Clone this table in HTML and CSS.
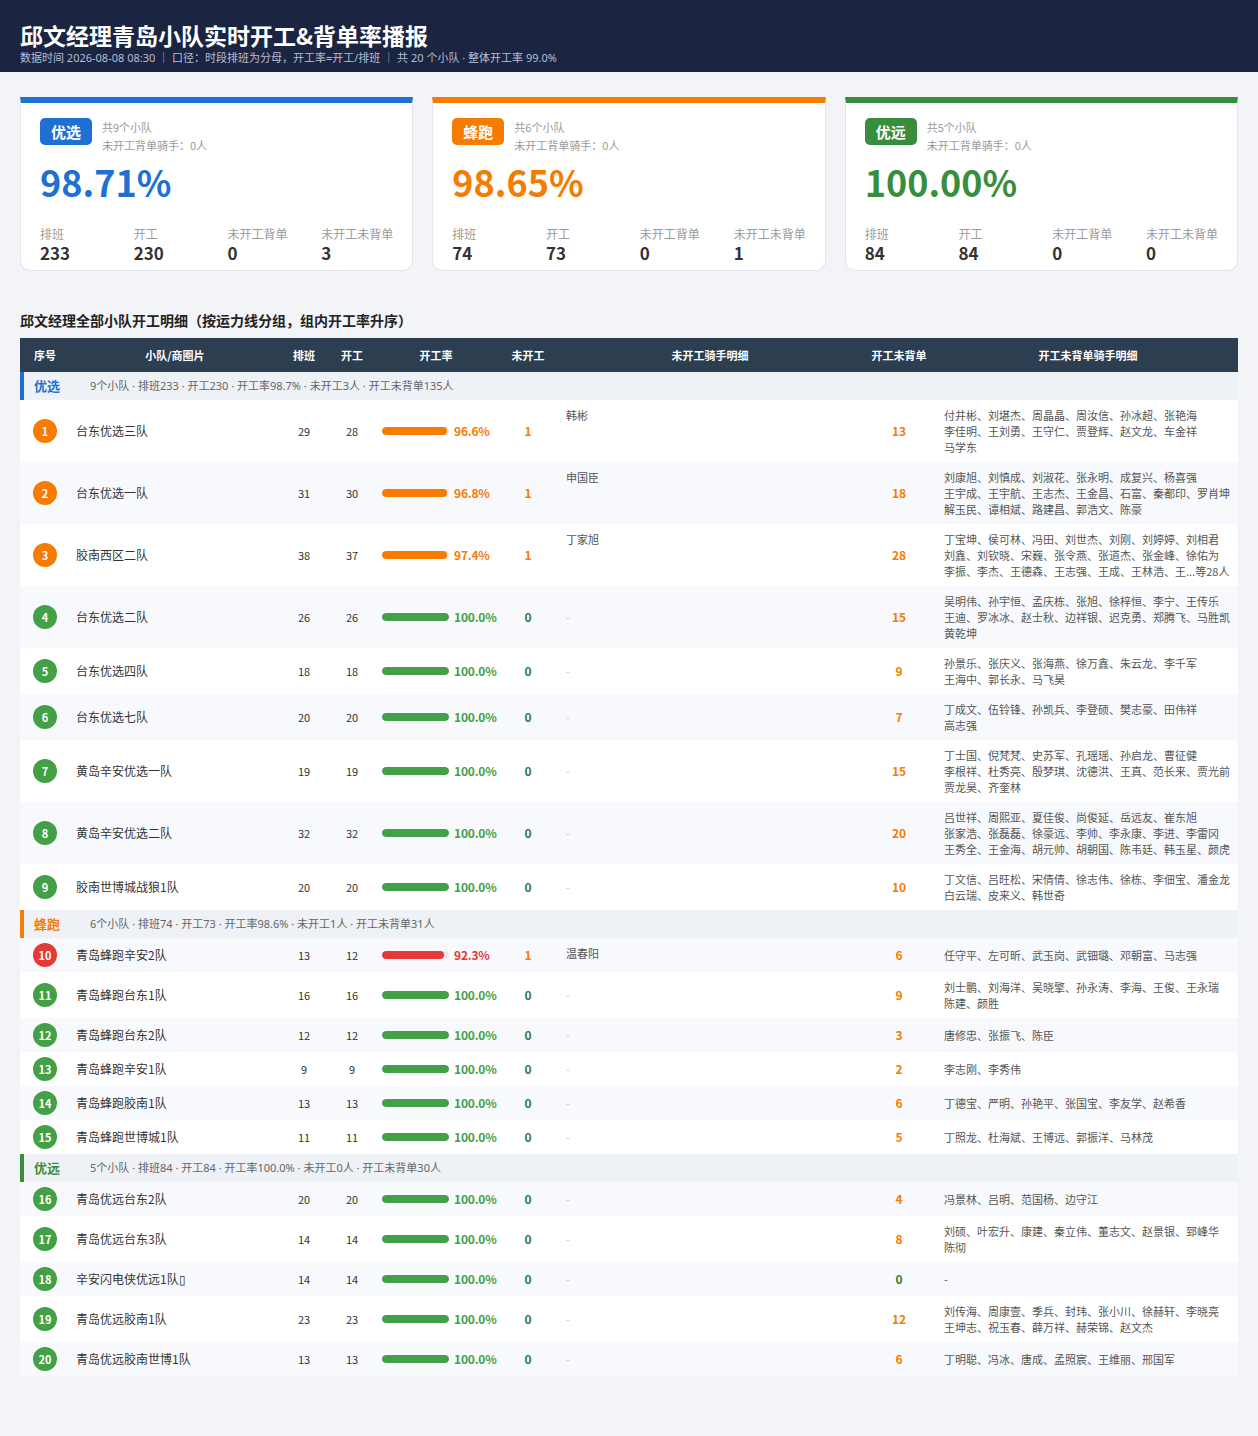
FILE: index.html
```html
<!DOCTYPE html>
<html lang="zh-CN">
<head>
<meta charset="utf-8">
<title>邱文经理青岛小队实时开工&amp;背单率播报</title>
<link rel="stylesheet" href="styles.css">
</head>
<body>
<header class="top">
  <h1>邱文经理青岛小队实时开工&amp;背单率播报</h1>
  <div class="sub">数据时间 2026-08-08 08:30 ｜ 口径：时段排班为分母，开工率=开工/排班 ｜ 共 20 个小队 · 整体开工率 99.0%</div>
</header>
<main class="main">
  <section class="cards">
    <div class="card c-blue">
      <div class="head"><span class="tag">优选</span><div class="meta">共9个小队<br>未开工背单骑手：0人</div></div>
      <div class="pct">98.71%</div>
      <div class="stats">
        <div><div class="l">排班</div><div class="v">233</div></div>
        <div><div class="l">开工</div><div class="v">230</div></div>
        <div><div class="l">未开工背单</div><div class="v">0</div></div>
        <div><div class="l">未开工未背单</div><div class="v">3</div></div>
      </div>
    </div>
    <div class="card c-orange">
      <div class="head"><span class="tag">蜂跑</span><div class="meta">共6个小队<br>未开工背单骑手：0人</div></div>
      <div class="pct">98.65%</div>
      <div class="stats">
        <div><div class="l">排班</div><div class="v">74</div></div>
        <div><div class="l">开工</div><div class="v">73</div></div>
        <div><div class="l">未开工背单</div><div class="v">0</div></div>
        <div><div class="l">未开工未背单</div><div class="v">1</div></div>
      </div>
    </div>
    <div class="card c-green">
      <div class="head"><span class="tag">优远</span><div class="meta">共5个小队<br>未开工背单骑手：0人</div></div>
      <div class="pct">100.00%</div>
      <div class="stats">
        <div><div class="l">排班</div><div class="v">84</div></div>
        <div><div class="l">开工</div><div class="v">84</div></div>
        <div><div class="l">未开工背单</div><div class="v">0</div></div>
        <div><div class="l">未开工未背单</div><div class="v">0</div></div>
      </div>
    </div>
  </section>

  <h2 class="sec-title">邱文经理全部小队开工明细（按运力线分组，组内开工率升序）</h2>

  <table class="tbl">
    <colgroup>
      <col class="w-rk"><col class="w-team"><col class="w-num"><col class="w-num"><col class="w-rate"><col class="w-miss"><col class="w-who"><col class="w-bk"><col class="w-names">
    </colgroup>
    <thead>
      <tr><th>序号</th><th>小队/商圈片</th><th>排班</th><th>开工</th><th>开工率</th><th>未开工</th><th>未开工骑手明细</th><th>开工未背单</th><th>开工未背单骑手明细</th></tr>
    </thead>
    <tbody>
      <tr class="grp g-blue"><td colspan="9"><div class="grp-in"><span class="gl">优选</span><span class="gs">9个小队 · 排班233 · 开工230 · 开工率98.7% · 未开工3人 · 开工未背单135人</span></div></td></tr>

      <tr><td><span class="rk o">1</span></td><td class="team">台东优选三队</td><td class="num">29</td><td class="num">28</td><td><div class="rate"><span class="bar"><span class="fill o" style="width:96.6%"></span></span><span class="rt o">96.6%</span></div></td><td class="miss o">1</td><td class="who">韩彬</td><td class="bk">13</td><td class="names">付井彬、刘堪杰、周晶晶、周汝信、孙冰超、张艳海<br>李佳明、王刘勇、王守仁、贾登辉、赵文龙、车金祥<br>马学东</td></tr>

      <tr class="alt"><td><span class="rk o">2</span></td><td class="team">台东优选一队</td><td class="num">31</td><td class="num">30</td><td><div class="rate"><span class="bar"><span class="fill o" style="width:96.8%"></span></span><span class="rt o">96.8%</span></div></td><td class="miss o">1</td><td class="who">申国臣</td><td class="bk">18</td><td class="names">刘康旭、刘慎成、刘淑花、张永明、成复兴、杨喜强<br>王宇成、王宇航、王志杰、王金昌、石富、秦都印、罗肖坤<br>解玉民、谭相斌、路建昌、郭浩文、陈豪</td></tr>

      <tr><td><span class="rk o">3</span></td><td class="team">胶南西区二队</td><td class="num">38</td><td class="num">37</td><td><div class="rate"><span class="bar"><span class="fill o" style="width:97.4%"></span></span><span class="rt o">97.4%</span></div></td><td class="miss o">1</td><td class="who">丁家旭</td><td class="bk">28</td><td class="names">丁宝坤、侯可林、冯田、刘世杰、刘刚、刘婷婷、刘相君<br>刘鑫、刘钦晓、宋巍、张令燕、张道杰、张金峰、徐佑为<br>李振、李杰、王德森、王志强、王成、王林浩、王...等28人</td></tr>

      <tr class="alt"><td><span class="rk g">4</span></td><td class="team">台东优选二队</td><td class="num">26</td><td class="num">26</td><td><div class="rate"><span class="bar"><span class="fill g" style="width:100%"></span></span><span class="rt g">100.0%</span></div></td><td class="miss g">0</td><td class="dash">-</td><td class="bk">15</td><td class="names">吴明伟、孙宇恒、孟庆栋、张旭、徐梓恒、李宁、王传乐<br>王迪、罗冰冰、赵士秋、边祥银、迟克勇、郑腾飞、马胜凯<br>黄乾坤</td></tr>

      <tr><td><span class="rk g">5</span></td><td class="team">台东优选四队</td><td class="num">18</td><td class="num">18</td><td><div class="rate"><span class="bar"><span class="fill g" style="width:100%"></span></span><span class="rt g">100.0%</span></div></td><td class="miss g">0</td><td class="dash">-</td><td class="bk">9</td><td class="names">孙景乐、张庆义、张海燕、徐万鑫、朱云龙、李千军<br>王海中、郭长永、马飞昊</td></tr>

      <tr class="alt"><td><span class="rk g">6</span></td><td class="team">台东优选七队</td><td class="num">20</td><td class="num">20</td><td><div class="rate"><span class="bar"><span class="fill g" style="width:100%"></span></span><span class="rt g">100.0%</span></div></td><td class="miss g">0</td><td class="dash">-</td><td class="bk">7</td><td class="names">丁成文、伍铃锋、孙凯兵、李登硕、樊志豪、田伟祥<br>高志强</td></tr>

      <tr><td><span class="rk g">7</span></td><td class="team">黄岛辛安优选一队</td><td class="num">19</td><td class="num">19</td><td><div class="rate"><span class="bar"><span class="fill g" style="width:100%"></span></span><span class="rt g">100.0%</span></div></td><td class="miss g">0</td><td class="dash">-</td><td class="bk">15</td><td class="names">丁士国、倪梵梵、史苏军、孔瑶瑶、孙启龙、曹征健<br>李根祥、杜秀亮、殷梦琪、沈德洪、王真、范长来、贾光前<br>贾龙昊、齐奎林</td></tr>

      <tr class="alt"><td><span class="rk g">8</span></td><td class="team">黄岛辛安优选二队</td><td class="num">32</td><td class="num">32</td><td><div class="rate"><span class="bar"><span class="fill g" style="width:100%"></span></span><span class="rt g">100.0%</span></div></td><td class="miss g">0</td><td class="dash">-</td><td class="bk">20</td><td class="names">吕世祥、周熙亚、夏佳俊、尚俊延、岳远友、崔东旭<br>张家浩、张磊磊、徐豪远、李帅、李永康、李进、李雷冈<br>王秀全、王金海、胡元帅、胡朝国、陈韦廷、韩玉星、颜虎</td></tr>

      <tr><td><span class="rk g">9</span></td><td class="team">胶南世博城战狼1队</td><td class="num">20</td><td class="num">20</td><td><div class="rate"><span class="bar"><span class="fill g" style="width:100%"></span></span><span class="rt g">100.0%</span></div></td><td class="miss g">0</td><td class="dash">-</td><td class="bk">10</td><td class="names">丁文信、吕旺松、宋倩倩、徐志伟、徐栋、李佃宝、潘金龙<br>白云瑞、皮来义、韩世奇</td></tr>

      <tr class="grp g-orange"><td colspan="9"><div class="grp-in"><span class="gl">蜂跑</span><span class="gs">6个小队 · 排班74 · 开工73 · 开工率98.6% · 未开工1人 · 开工未背单31人</span></div></td></tr>

      <tr class="alt"><td><span class="rk r">10</span></td><td class="team">青岛蜂跑辛安2队</td><td class="num">13</td><td class="num">12</td><td><div class="rate"><span class="bar"><span class="fill r" style="width:92.3%"></span></span><span class="rt r">92.3%</span></div></td><td class="miss o">1</td><td class="who">温春阳</td><td class="bk">6</td><td class="names">任守平、左可昕、武玉岗、武钿璐、邓朝富、马志强</td></tr>

      <tr><td><span class="rk g">11</span></td><td class="team">青岛蜂跑台东1队</td><td class="num">16</td><td class="num">16</td><td><div class="rate"><span class="bar"><span class="fill g" style="width:100%"></span></span><span class="rt g">100.0%</span></div></td><td class="miss g">0</td><td class="dash">-</td><td class="bk">9</td><td class="names">刘士鹏、刘海洋、吴晓擎、孙永涛、李海、王俊、王永瑞<br>陈建、颜胜</td></tr>

      <tr class="alt"><td><span class="rk g">12</span></td><td class="team">青岛蜂跑台东2队</td><td class="num">12</td><td class="num">12</td><td><div class="rate"><span class="bar"><span class="fill g" style="width:100%"></span></span><span class="rt g">100.0%</span></div></td><td class="miss g">0</td><td class="dash">-</td><td class="bk">3</td><td class="names">唐修忠、张振飞、陈臣</td></tr>

      <tr><td><span class="rk g">13</span></td><td class="team">青岛蜂跑辛安1队</td><td class="num">9</td><td class="num">9</td><td><div class="rate"><span class="bar"><span class="fill g" style="width:100%"></span></span><span class="rt g">100.0%</span></div></td><td class="miss g">0</td><td class="dash">-</td><td class="bk">2</td><td class="names">李志刚、李秀伟</td></tr>

      <tr class="alt"><td><span class="rk g">14</span></td><td class="team">青岛蜂跑胶南1队</td><td class="num">13</td><td class="num">13</td><td><div class="rate"><span class="bar"><span class="fill g" style="width:100%"></span></span><span class="rt g">100.0%</span></div></td><td class="miss g">0</td><td class="dash">-</td><td class="bk">6</td><td class="names">丁德宝、严明、孙艳平、张国宝、李友学、赵希香</td></tr>

      <tr><td><span class="rk g">15</span></td><td class="team">青岛蜂跑世博城1队</td><td class="num">11</td><td class="num">11</td><td><div class="rate"><span class="bar"><span class="fill g" style="width:100%"></span></span><span class="rt g">100.0%</span></div></td><td class="miss g">0</td><td class="dash">-</td><td class="bk">5</td><td class="names">丁照龙、杜海斌、王博远、郭振洋、马林茂</td></tr>

      <tr class="grp g-green"><td colspan="9"><div class="grp-in"><span class="gl">优远</span><span class="gs">5个小队 · 排班84 · 开工84 · 开工率100.0% · 未开工0人 · 开工未背单30人</span></div></td></tr>

      <tr class="alt"><td><span class="rk g">16</span></td><td class="team">青岛优远台东2队</td><td class="num">20</td><td class="num">20</td><td><div class="rate"><span class="bar"><span class="fill g" style="width:100%"></span></span><span class="rt g">100.0%</span></div></td><td class="miss g">0</td><td class="dash">-</td><td class="bk">4</td><td class="names">冯景林、吕明、范国杨、边守江</td></tr>

      <tr><td><span class="rk g">17</span></td><td class="team">青岛优远台东3队</td><td class="num">14</td><td class="num">14</td><td><div class="rate"><span class="bar"><span class="fill g" style="width:100%"></span></span><span class="rt g">100.0%</span></div></td><td class="miss g">0</td><td class="dash">-</td><td class="bk">8</td><td class="names">刘硕、叶宏升、康建、秦立伟、董志文、赵景银、郅峰华<br>陈彻</td></tr>

      <tr class="alt"><td><span class="rk g">18</span></td><td class="team">辛安闪电侠优远1队▯</td><td class="num">14</td><td class="num">14</td><td><div class="rate"><span class="bar"><span class="fill g" style="width:100%"></span></span><span class="rt g">100.0%</span></div></td><td class="miss g">0</td><td class="dash">-</td><td class="bk g">0</td><td class="names dash">-</td></tr>

      <tr><td><span class="rk g">19</span></td><td class="team">青岛优远胶南1队</td><td class="num">23</td><td class="num">23</td><td><div class="rate"><span class="bar"><span class="fill g" style="width:100%"></span></span><span class="rt g">100.0%</span></div></td><td class="miss g">0</td><td class="dash">-</td><td class="bk">12</td><td class="names">刘传海、周康壹、季兵、封玮、张小川、徐赫轩、李晓亮<br>王坤志、祝玉春、薛万祥、赫荣锦、赵文杰</td></tr>

      <tr class="alt"><td><span class="rk g">20</span></td><td class="team">青岛优远胶南世博1队</td><td class="num">13</td><td class="num">13</td><td><div class="rate"><span class="bar"><span class="fill g" style="width:100%"></span></span><span class="rt g">100.0%</span></div></td><td class="miss g">0</td><td class="dash">-</td><td class="bk">6</td><td class="names">丁明聪、冯冰、唐成、孟照宸、王维丽、邢国军</td></tr>
    </tbody>
  </table>
</main>
</body>
</html>
```

FILE: styles.css
```css
* { box-sizing: border-box; }

body {
  margin: 0;
  background: #f2f4f8;
  font-family: "Noto Sans CJK SC", "Noto Sans", sans-serif;
  color: #333;
}

/* header */
.top {
  background: #1b2440;
  color: #fff;
  padding: 20px 20px 6px;
}
.top h1 {
  margin: 0;
  font-size: 23px;
  line-height: 30px;
  font-weight: 700;
}
.top .sub {
  font-family: "Noto Sans", "Noto Sans CJK SC", sans-serif;
  font-size: 11px;
  line-height: 16px;
  color: #b6bfd4;
}

.main {
  padding: 25px 20px 60px;
}

/* summary cards */
.cards {
  display: grid;
  grid-template-columns: repeat(3, 1fr);
  gap: 19px;
}
.card {
  background: #fff;
  border: 1px solid #e1e5ec;
  border-top: 6px solid #1e6fd0;
  border-radius: 0 0 10px 10px;
  padding: 15px 19px 7px;
}
.head {
  display: flex;
  align-items: flex-start;
  gap: 10px;
}
.tag {
  width: 52px;
  height: 27px;
  line-height: 27px;
  text-align: center;
  border-radius: 5px;
  color: #fff;
  font-size: 15px;
  font-weight: 700;
}
.meta {
  font-size: 11px;
  line-height: 18px;
  color: #9a9a9a;
}
.pct {
  margin-top: 5px;
  font-size: 36px;
  line-height: 44px;
  font-weight: 700;
}
.stats {
  margin-top: 22px;
  display: grid;
  grid-template-columns: repeat(4, 1fr);
  column-gap: 27px;
}
.stats .l {
  font-size: 12px;
  line-height: 18px;
  color: #9a9a9a;
  white-space: nowrap;
}
.stats .v {
  font-size: 17px;
  line-height: 20px;
  font-weight: 700;
  color: #333;
}

.c-blue { border-top-color: #1e70d2; }
.c-blue .tag { background: #1e70d2; }
.c-blue .pct { color: #1e70d2; }
.c-orange { border-top-color: #f57c00; }
.c-orange .tag { background: #f57c00; }
.c-orange .pct { color: #f57c00; }
.c-green { border-top-color: #388e3c; }
.c-green .tag { background: #388e3c; }
.c-green .pct { color: #388e3c; }

/* section title */
.sec-title {
  margin: 39px 0 8px;
  font-size: 14px;
  line-height: 20px;
  font-weight: 700;
  color: #222;
}

/* table */
.tbl {
  width: 100%;
  border-collapse: collapse;
  table-layout: fixed;
  font-size: 11px;
}
.w-rk { width: 50px; }
.w-team { width: 210px; }
.w-num { width: 48px; }
.w-rate { width: 120px; }
.w-miss { width: 64px; }
.w-who { width: 300px; }
.w-bk { width: 78px; }
.w-names { width: 300px; }

.tbl th {
  background: #2c3e50;
  color: #fff;
  height: 34px;
  padding: 0 6px;
  font-size: 11px;
  font-weight: 700;
  text-align: center;
}
.tbl td {
  padding: 5px 6px;
  line-height: 16px;
  vertical-align: middle;
  background: #fff;
}
.tbl tr.alt td { background: #f7f9fc; }

.grp td {
  background: #eef1f6;
  height: 28px;
  padding: 0;
}
.grp-in {
  display: flex;
  align-items: center;
  height: 28px;
  padding-left: 14px;
}
.gl {
  width: 56px;
  font-size: 13px;
  font-weight: 700;
}
.gs {
  font-family: "Noto Sans", "Noto Sans CJK SC", sans-serif;
  font-size: 11px;
  color: #666;
}
.g-blue td { box-shadow: inset 4px 0 0 #1e70d2; }
.g-blue .gl { color: #1e70d2; }
.g-orange td { box-shadow: inset 4px 0 0 #f57c00; }
.g-orange .gl { color: #f57c00; }
.g-green td { box-shadow: inset 4px 0 0 #388e3c; }
.g-green .gl { color: #388e3c; }

.rk {
  display: block;
  margin: 0 auto;
  width: 24px;
  height: 24px;
  line-height: 24px;
  border-radius: 50%;
  color: #fff;
  font-size: 11px;
  font-weight: 700;
  text-align: center;
}
.rk.o { background: #f57c00; }
.rk.r { background: #e53935; }
.rk.g { background: #43a047; }

.team {
  font-size: 12px;
  color: #333;
  white-space: nowrap;
}
.num {
  text-align: center;
  color: #333;
}

.rate {
  display: flex;
  align-items: center;
  white-space: nowrap;
}
.bar {
  display: block;
  width: 67px;
  height: 8px;
  border-radius: 4px;
  background: #e4e6ea;
  overflow: hidden;
  flex: none;
}
.fill {
  display: block;
  height: 100%;
  border-radius: 4px;
}
.fill.o { background: #f57c00; }
.fill.r { background: #e53935; }
.fill.g { background: #43a047; }
.rt {
  margin-left: 5px;
  font-size: 12px;
  font-weight: 700;
  letter-spacing: -0.2px;
}
.rt.o { color: #f57c00; }
.rt.r { color: #e53935; }
.rt.g { color: #43a047; }

.miss {
  text-align: center;
  font-size: 12px;
  font-weight: 700;
}
.miss.o { color: #f57c00; }
.miss.g { color: #2e7d32; }

.who {
  vertical-align: top !important;
  padding-top: 7px !important;
  color: #555;
}
.dash {
  color: #c2c6cd;
}

.bk {
  text-align: center;
  font-size: 12px;
  font-weight: 700;
  color: #f57c00;
}
.bk.g { color: #2e7d32; }

.names {
  padding: 7px 6px !important;
  color: #555;
  white-space: nowrap;
}
```
